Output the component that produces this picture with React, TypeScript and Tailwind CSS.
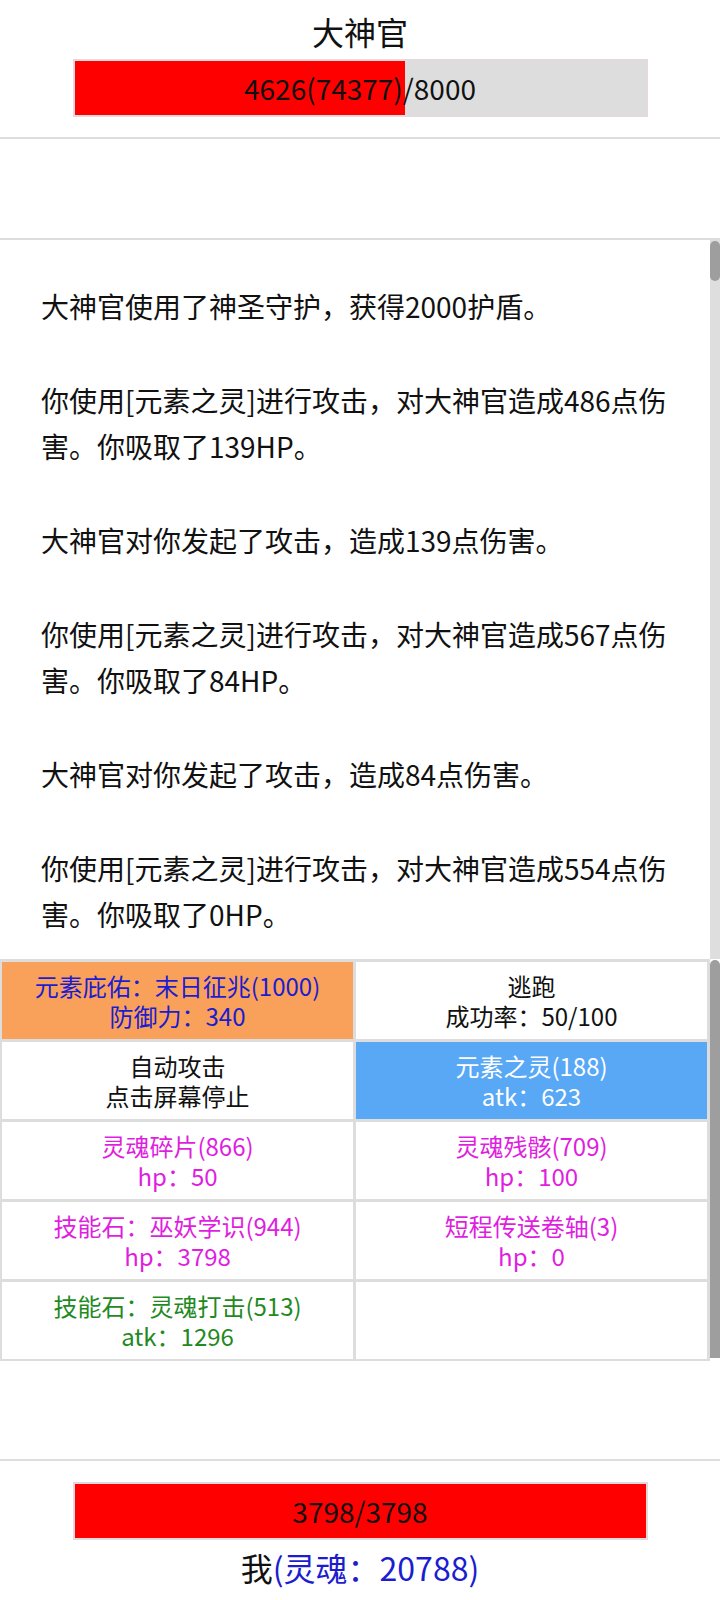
import React from 'react';

type Cell = {
  title?: string;
  sub?: string;
  bg: string;
  color: string;
};

const logs = [
  '大神官使用了神圣守护，获得2000护盾。',
  '你使用[元素之灵]进行攻击，对大神官造成486点伤害。你吸取了139HP。',
  '大神官对你发起了攻击，造成139点伤害。',
  '你使用[元素之灵]进行攻击，对大神官造成567点伤害。你吸取了84HP。',
  '大神官对你发起了攻击，造成84点伤害。',
  '你使用[元素之灵]进行攻击，对大神官造成554点伤害。你吸取了0HP。',
];

// class names spelled out so tailwind picks them up
const cells: Cell[] = [
  { title: '元素庇佑：末日征兆(1000)', sub: '防御力：340', bg: 'bg-[#f9a15a]', color: 'text-[#1c1cd0]' },
  { title: '逃跑', sub: '成功率：50/100', bg: 'bg-white', color: 'text-[#111]' },
  { title: '自动攻击', sub: '点击屏幕停止', bg: 'bg-white', color: 'text-[#111]' },
  { title: '元素之灵(188)', sub: 'atk：623', bg: 'bg-[#58a8f6]', color: 'text-white' },
  { title: '灵魂碎片(866)', sub: 'hp：50', bg: 'bg-white', color: 'text-[#e01ee0]' },
  { title: '灵魂残骸(709)', sub: 'hp：100', bg: 'bg-white', color: 'text-[#e01ee0]' },
  { title: '技能石：巫妖学识(944)', sub: 'hp：3798', bg: 'bg-white', color: 'text-[#e01ee0]' },
  { title: '短程传送卷轴(3)', sub: 'hp：0', bg: 'bg-white', color: 'text-[#e01ee0]' },
  { title: '技能石：灵魂打击(513)', sub: 'atk：1296', bg: 'bg-white', color: 'text-[#1f8a1f]' },
  { bg: 'bg-white', color: 'text-[#111]' },
];

const HpBar = ({ value, label }: { value: number; label: string }) => (
  <div className="grid w-[575px] h-[58px] border-2 border-[#e2dadd] bg-[#dddddd]">
    <div className="[grid-area:1/1] h-full bg-[#ff0000]" style={{ width: `${value * 100}%` }} />
    <div className="[grid-area:1/1] flex items-center justify-center text-[28px] text-[#111]">{label}</div>
  </div>
);

export default function App() {
  return (
    <div className="w-[720px] bg-white text-[#111] font-['Noto_Sans_CJK_SC','Noto_Sans',sans-serif]">
      {/* boss */}
      <div className="h-[137px] flex flex-col items-center">
        <div className="mt-[12px] text-[32px] leading-[38px]">大神官</div>
        <div className="mt-[9px]">
          <HpBar value={4626 / 8000} label="4626(74377)/8000" />
        </div>
      </div>
      <div className="h-[2px] bg-[#dddddd]" />
      <div className="h-[99px]" />
      <div className="h-[2px] bg-[#dddddd]" />

      {/* battle log */}
      <div className="flex h-[719px]">
        <div className="flex-1 overflow-hidden pl-[41px] pr-[30px] pt-[43px] text-[28px] leading-[46px]">
          {logs.map((l, i) => (
            <p key={i} className="mb-[48px]">{l}</p>
          ))}
        </div>
        <div className="w-[10px] bg-[#dedede] pt-[1px]">
          <div className="h-[40px] rounded-full bg-[#9e9e9e]" />
        </div>
      </div>

      {/* actions */}
      <div className="flex">
        <div className="flex-1 grid grid-cols-2 gap-[3px] bg-[#dddddd] pl-[2px] pr-[3px] pt-[3px] pb-[2px]">
          {cells.map((c, i) => (
            <div key={i} className={`h-[77px] flex flex-col items-center justify-center text-[24px] leading-[30px] ${c.bg} ${c.color}`}>
              {c.title && <div>{c.title}</div>}
              {c.sub && <div>{c.sub}</div>}
            </div>
          ))}
        </div>
        <div className="w-[10px] pt-[1px] pb-[3px]">
          <div className="h-full rounded-t-full rounded-b-[4px] bg-[#9e9e9e]" />
        </div>
      </div>

      <div className="h-[98px]" />
      <div className="h-[2px] bg-[#dddddd]" />

      {/* player */}
      <div className="flex flex-col items-center pt-[21px] pb-[14px]">
        <HpBar value={1} label="3798/3798" />
        <div className="mt-[8px] text-[32px] leading-[38px]">
          我<span className="text-[#1c1cd0]">(灵魂：20788)</span>
        </div>
      </div>
    </div>
  );
}
